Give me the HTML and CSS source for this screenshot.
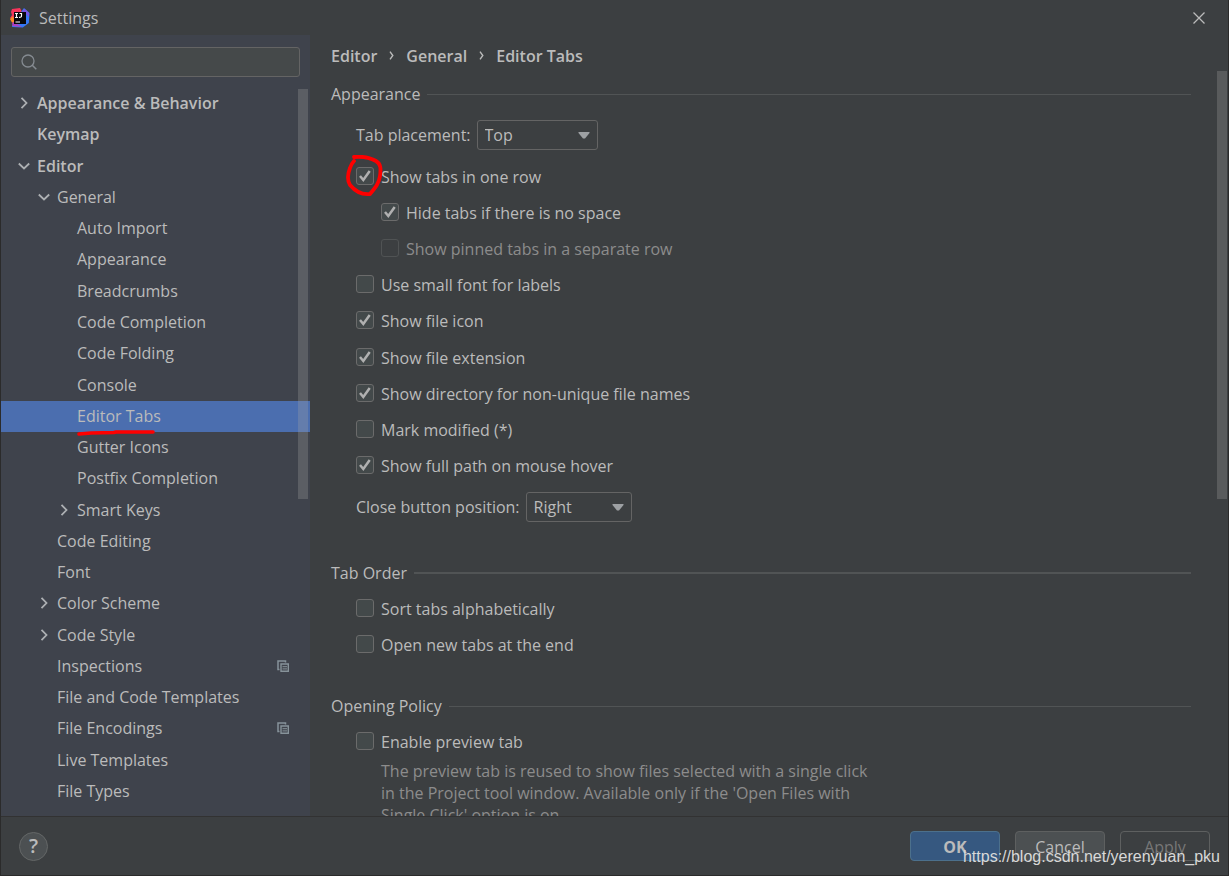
FILE: index.html
```html
<!DOCTYPE html>
<html lang="en">
<head>
<meta charset="utf-8">
<title>Settings</title>
<link rel="stylesheet" href="styles.css">
</head>
<body>
<svg class="defs" aria-hidden="true">
  <symbol id="right" viewBox="0 0 16 16"><path d="M5.5 2.8 10.5 8l-5 5.2" fill="none" stroke="#adb0b3" stroke-width="1.8"/></symbol>
  <symbol id="down" viewBox="0 0 16 16"><path d="M2.8 5.5 8 10.5l5.200-5" fill="none" stroke="#adb0b3" stroke-width="1.8"/></symbol>
  <symbol id="project" viewBox="0 0 12 12"><path d="M8.500 2.500V1H1v8.500h1.500" fill="none" stroke="#87939a" stroke-width="1.500"/><path d="M4 4h7.300v7.300H4z" fill="none" stroke="#87939a" stroke-width="1.400"/><path d="M5.500 6.700h4.500M5.500 8.900h4.500" stroke="#87939a"/></symbol>
</svg>
<div class="window">
  <header class="titlebar">
    <svg class="logo" viewBox="0 0 20 20" aria-hidden="true">
      <path d="M1 4 2 1l8-1 2 4-5 11-5 1 1-4-3-2 2-3z" fill="#f8345b"/>
      <path d="M0 11l3-3 2 6-3 .500z" fill="#fd8b24"/>
      <path d="m11 4 3-4 5.500 5-.700 10-6 4.500L2 19l1-4 9-2z" fill="#3578f6"/>
      <path d="m12 4 2-3 2 1 3 3v4l-3-3z" fill="#7c52df"/>
      <path d="m2 18 1-4 6 3 3 2z" fill="#ae3fc0"/>
      <path d="M4 4h12v12H4z" fill="#08070b"/>
      <path d="M5 5.500h3M6.500 5.500v4M5 9.500h3M9.500 5.500H12M11.500 5v3q0 1.500-2.500 1.300M5.500 14h4.500" fill="none" stroke="#fff" stroke-width="1.200"/>
    </svg>
    <h1 class="title">Settings</h1>
    <button class="close" type="button" aria-label="Close"><svg viewBox="0 0 12 12"><path d="M.5.5l11 11M11.500.5l-11 11" stroke="#bbb" stroke-width="1.300"/></svg></button>
  </header>
  <div class="main">
    <aside class="sidebar">
      <label class="search">
        <svg viewBox="0 0 16 16" aria-hidden="true"><circle cx="7" cy="7" r="6" fill="none" stroke="#858b91" stroke-width="1.300"/><path d="m11 11 4.300 4.300" stroke="#858b91" stroke-width="1.500"/></svg>
        <input type="text" aria-label="Search settings">
      </label>
      <nav class="tree" aria-label="Settings categories">
        <a class="node bold" href="#"><svg class="arrow"><use href="#right"/></svg>Appearance &amp; Behavior</a>
        <a class="node bold leaf" href="#">Keymap</a>
        <a class="node bold" href="#"><svg class="arrow"><use href="#down"/></svg>Editor</a>
        <a class="node l2" href="#"><svg class="arrow"><use href="#down"/></svg>General</a>
        <a class="node l3 leaf" href="#">Auto Import</a>
        <a class="node l3 leaf" href="#">Appearance</a>
        <a class="node l3 leaf" href="#">Breadcrumbs</a>
        <a class="node l3 leaf" href="#">Code Completion</a>
        <a class="node l3 leaf" href="#">Code Folding</a>
        <a class="node l3 leaf" href="#">Console</a>
        <a class="node l3 leaf selected" href="#" aria-current="page"><span class="marked">Editor Tabs<svg class="underline" viewBox="0 0 78 6" aria-hidden="true"><path d="M2 4 14 3l23-.5L39 2h37" fill="none" stroke="#fe0000" stroke-width="3.600" stroke-linecap="round"/></svg></span></a>
        <a class="node l3 leaf" href="#">Gutter Icons</a>
        <a class="node l3 leaf" href="#">Postfix Completion</a>
        <a class="node l3" href="#"><svg class="arrow"><use href="#right"/></svg>Smart Keys</a>
        <a class="node l2 leaf" href="#">Code Editing</a>
        <a class="node l2 leaf" href="#">Font</a>
        <a class="node l2" href="#"><svg class="arrow"><use href="#right"/></svg>Color Scheme</a>
        <a class="node l2" href="#"><svg class="arrow"><use href="#right"/></svg>Code Style</a>
        <a class="node l2 leaf" href="#">Inspections<svg class="scope"><use href="#project"/></svg></a>
        <a class="node l2 leaf" href="#">File and Code Templates</a>
        <a class="node l2 leaf" href="#">File Encodings<svg class="scope"><use href="#project"/></svg></a>
        <a class="node l2 leaf" href="#">Live Templates</a>
        <a class="node l2 leaf" href="#">File Types</a>
        <span class="thumb tree-thumb"></span>
      </nav>
    </aside>
    <main class="content">
      <nav class="crumbs" aria-label="Breadcrumb">
        <span>Editor</span><svg viewBox="0 0 5 9"><path d="m1 .7 2.800 3.800L1 8.300" fill="none" stroke="#bbb" stroke-width="1.400"/></svg><span>General</span><svg viewBox="0 0 5 9"><path d="m1 .7 2.800 3.800L1 8.300" fill="none" stroke="#bbb" stroke-width="1.400"/></svg><span>Editor Tabs</span>
      </nav>
      <div class="options">
        <section class="group">
          <h2 class="heading">Appearance</h2>
          <div class="field">
            <label for="placement">Tab placement:</label>
            <span class="combo wide"><select id="placement"><option>Top</option><option>Bottom</option><option>Left</option><option>Right</option></select><svg viewBox="0 0 12 7"><path d="M.5 0h11v1L7 6.500H5L.5 1z" fill="#9da0a3"/></svg></span>
          </div>
          <div class="checks">
            <label class="check"><span class="box"><input type="checkbox" checked><svg class="circle" viewBox="0 0 38 42" aria-hidden="true"><path d="M8 2c7-.7 15 0 22 4 5 3 5 8 4 15-1 7-4 11-10 18-8 1-15-3-20-9C1 25 2 18 4 13c1-3 2-5 4-7" fill="none" stroke="#fe0000" stroke-width="3.800" stroke-linecap="round" stroke-linejoin="round"/></svg></span>Show tabs in one row</label>
            <label class="check nested"><input type="checkbox" checked>Hide tabs if there is no space</label>
            <label class="check nested off"><input type="checkbox" disabled>Show pinned tabs in a separate row</label>
            <label class="check"><input type="checkbox">Use small font for labels</label>
            <label class="check"><input type="checkbox" checked>Show file icon</label>
            <label class="check"><input type="checkbox" checked>Show file extension</label>
            <label class="check"><input type="checkbox" checked>Show directory for non-unique file names</label>
            <label class="check"><input type="checkbox">Mark modified (*)</label>
            <label class="check"><input type="checkbox" checked>Show full path on mouse hover</label>
          </div>
          <div class="field">
            <label for="position">Close button position:</label>
            <span class="combo"><select id="position"><option>Right</option><option>Left</option><option>None</option></select><svg viewBox="0 0 12 7"><path d="M.5 0h11v1L7 6.500H5L.5 1z" fill="#9da0a3"/></svg></span>
          </div>
        </section>
        <section class="group">
          <h2 class="heading thick">Tab Order</h2>
          <label class="check"><input type="checkbox">Sort tabs alphabetically</label>
          <label class="check"><input type="checkbox">Open new tabs at the end</label>
        </section>
        <section class="group">
          <h2 class="heading">Opening Policy</h2>
          <label class="check"><input type="checkbox">Enable preview tab</label>
          <p class="hint">The preview tab is reused to show files selected with a single click<br>in the Project tool window. Available only if the 'Open Files with<br>Single Click' option is on</p>
        </section>
      </div>
      <span class="thumb content-thumb"></span>
    </main>
  </div>
  <footer class="footer">
    <button class="help" type="button" aria-label="Help">?</button>
    <button class="btn primary" type="button">OK</button>
    <button class="btn" type="button">Cancel</button>
    <button class="btn ghost" type="button" disabled>Apply</button>
    <span class="watermark">https://blog.csdn.net/yerenyuan_pku</span>
  </footer>
</div>
</body>
</html>
```
FILE: styles.css
```css
* { box-sizing: border-box; }
body {
  margin: 0;
  background: #3c3f41;
  color: #bbb;
  font: 16px/20px "Open Sans", "Noto Sans", sans-serif;
}
svg { display: block; flex: none; }
button, input, select { font: inherit; color: inherit; margin: 0; }
.defs { position: absolute; width: 0; height: 0; }
.window {
  display: flex;
  flex-direction: column;
  height: 100vh;
  border: solid #2b2b2b;
  border-width: 0 1px 1px;
}
.titlebar {
  display: flex;
  align-items: center;
  height: 35px;
  padding: 0 23px 0 9px;
}
.logo { width: 20px; height: 20px; }
.title { margin: 0 auto 0 9px; font-size: 16px; font-weight: 400; }
.close { padding: 0; border: 0; background: none; }
.close svg { width: 12px; height: 12px; }
.main { display: flex; flex: 1; min-height: 0; }

.sidebar {
  display: flex;
  flex-direction: column;
  width: 309px;
  padding: 12px 0 9px;
  background: #3f434c;
}
.search {
  display: flex;
  align-items: center;
  gap: 8px;
  height: 30px;
  margin: 0 10px;
  padding: 0 9px;
  border: 1px solid #646464;
  border-radius: 3px;
  background: #45494a;
}
.search svg { width: 16px; height: 16px; }
.search input { flex: 1; min-width: 0; border: 0; outline: 0; background: none; }
.tree {
  position: relative;
  display: flex;
  flex: 1;
  flex-direction: column;
  min-height: 0;
  margin-top: 11px;
}
.node {
  display: flex;
  flex: 1;
  align-items: center;
  gap: 5px;
  padding: 0 21px 1px 15px;
  color: inherit;
  text-decoration: none;
  white-space: nowrap;
}
.bold { font-weight: 600; }
.l2 { padding-left: 35px; }
.l3 { padding-left: 55px; }
.leaf { padding-left: 36px; }
.l2.leaf { padding-left: 56px; }
.l3.leaf { padding-left: 76px; }
.arrow { width: 16px; height: 16px; }
.selected { background: #4b6eaf; }
.scope { width: 12px; height: 12px; margin-left: auto; }
.marked { position: relative; }
.underline { position: absolute; left: 0; top: 24px; width: 78px; height: 6px; z-index: 1; }
.thumb { position: absolute; width: 10px; background: rgba(166, 166, 166, .28); }
.tree-thumb { top: 1px; right: 2px; height: 410px; }

.content { position: relative; flex: 1; min-width: 0; overflow: hidden; }
.crumbs {
  display: flex;
  align-items: center;
  gap: 12px;
  height: 41px;
  padding-left: 21px;
  font-weight: 600;
}
.crumbs svg { width: 5px; height: 9px; }
.options { padding: 5px 37px 0 21px; }
.group { margin-bottom: 30px; }
.heading {
  display: flex;
  align-items: center;
  gap: 7px;
  height: 26px;
  margin: 0 0 5px;
  font-size: 16px;
  font-weight: 400;
}
.heading::after { content: ""; flex: 1; height: 1px; background: #515455; }
.thick::after { height: 2px; }
.field { display: flex; align-items: center; gap: 6px; height: 46px; padding-left: 25px; }
.combo { position: relative; width: 106px; height: 30px; }
.combo.wide { width: 121px; }
.combo select {
  width: 100%;
  height: 100%;
  padding: 0 7px;
  border: 1px solid #646464;
  border-radius: 3px;
  background: #3c3f41;
  appearance: none;
}
.combo svg { position: absolute; top: 12px; right: 8px; width: 12px; height: 7px; pointer-events: none; }
.checks { display: grid; grid-auto-rows: 1fr; min-height: 325px; margin-top: 1px; }
.check { display: flex; align-items: center; gap: 7px; min-height: 36px; padding-left: 25px; }
.nested { padding-left: 50px; }
.check input {
  display: block;
  width: 18px;
  height: 18px;
  margin-bottom: 2px;
  border: 1px solid #6b6b6b;
  border-radius: 3px;
  background: #43494a;
  appearance: none;
}
.check input:checked {
  background: #43494a url("data:image/svg+xml,%3Csvg xmlns='http://www.w3.org/2000/svg' viewBox='0 0 16 16'%3E%3Cpath d='M3 8 6.300 12 12.700 3' fill='none' stroke='%23b0b0b0' stroke-width='2.500'/%3E%3C/svg%3E") center / 16px 16px;
}
.off { color: #8c8c8c; }
.check.off input { border-color: #505354; background: none; }
.box { position: relative; }
.circle { position: absolute; top: -12px; left: -10px; width: 38px; height: 42px; }
.hint { margin: 0; padding-left: 50px; color: #8c8c8c; line-height: 22px; }
.content-thumb { top: 36px; right: 1px; height: 428px; }

.footer {
  position: relative;
  display: flex;
  align-items: center;
  gap: 15px;
  height: 59px;
  padding: 0 18px;
  border-top: 1px solid #323232;
}
.help {
  width: 29px;
  height: 29px;
  margin-right: auto;
  padding: 0;
  border: 1px solid #646767;
  border-radius: 50%;
  background: #4c5052;
  font-size: 20px;
  font-weight: 600;
  line-height: 26px;
}
.btn {
  width: 90px;
  height: 30px;
  padding: 1px 0 0;
  border: 1px solid #5e6060;
  border-radius: 4px;
  background: #4c5052;
}
.primary { border-color: #4c708c; background: #365880; font-weight: 700; }
.ghost { background: none; color: #777; }
.watermark {
  position: absolute;
  right: 8px;
  bottom: 8px;
  color: #d8d8d8;
  font: 16px/20px "Liberation Sans", sans-serif;
}
```
